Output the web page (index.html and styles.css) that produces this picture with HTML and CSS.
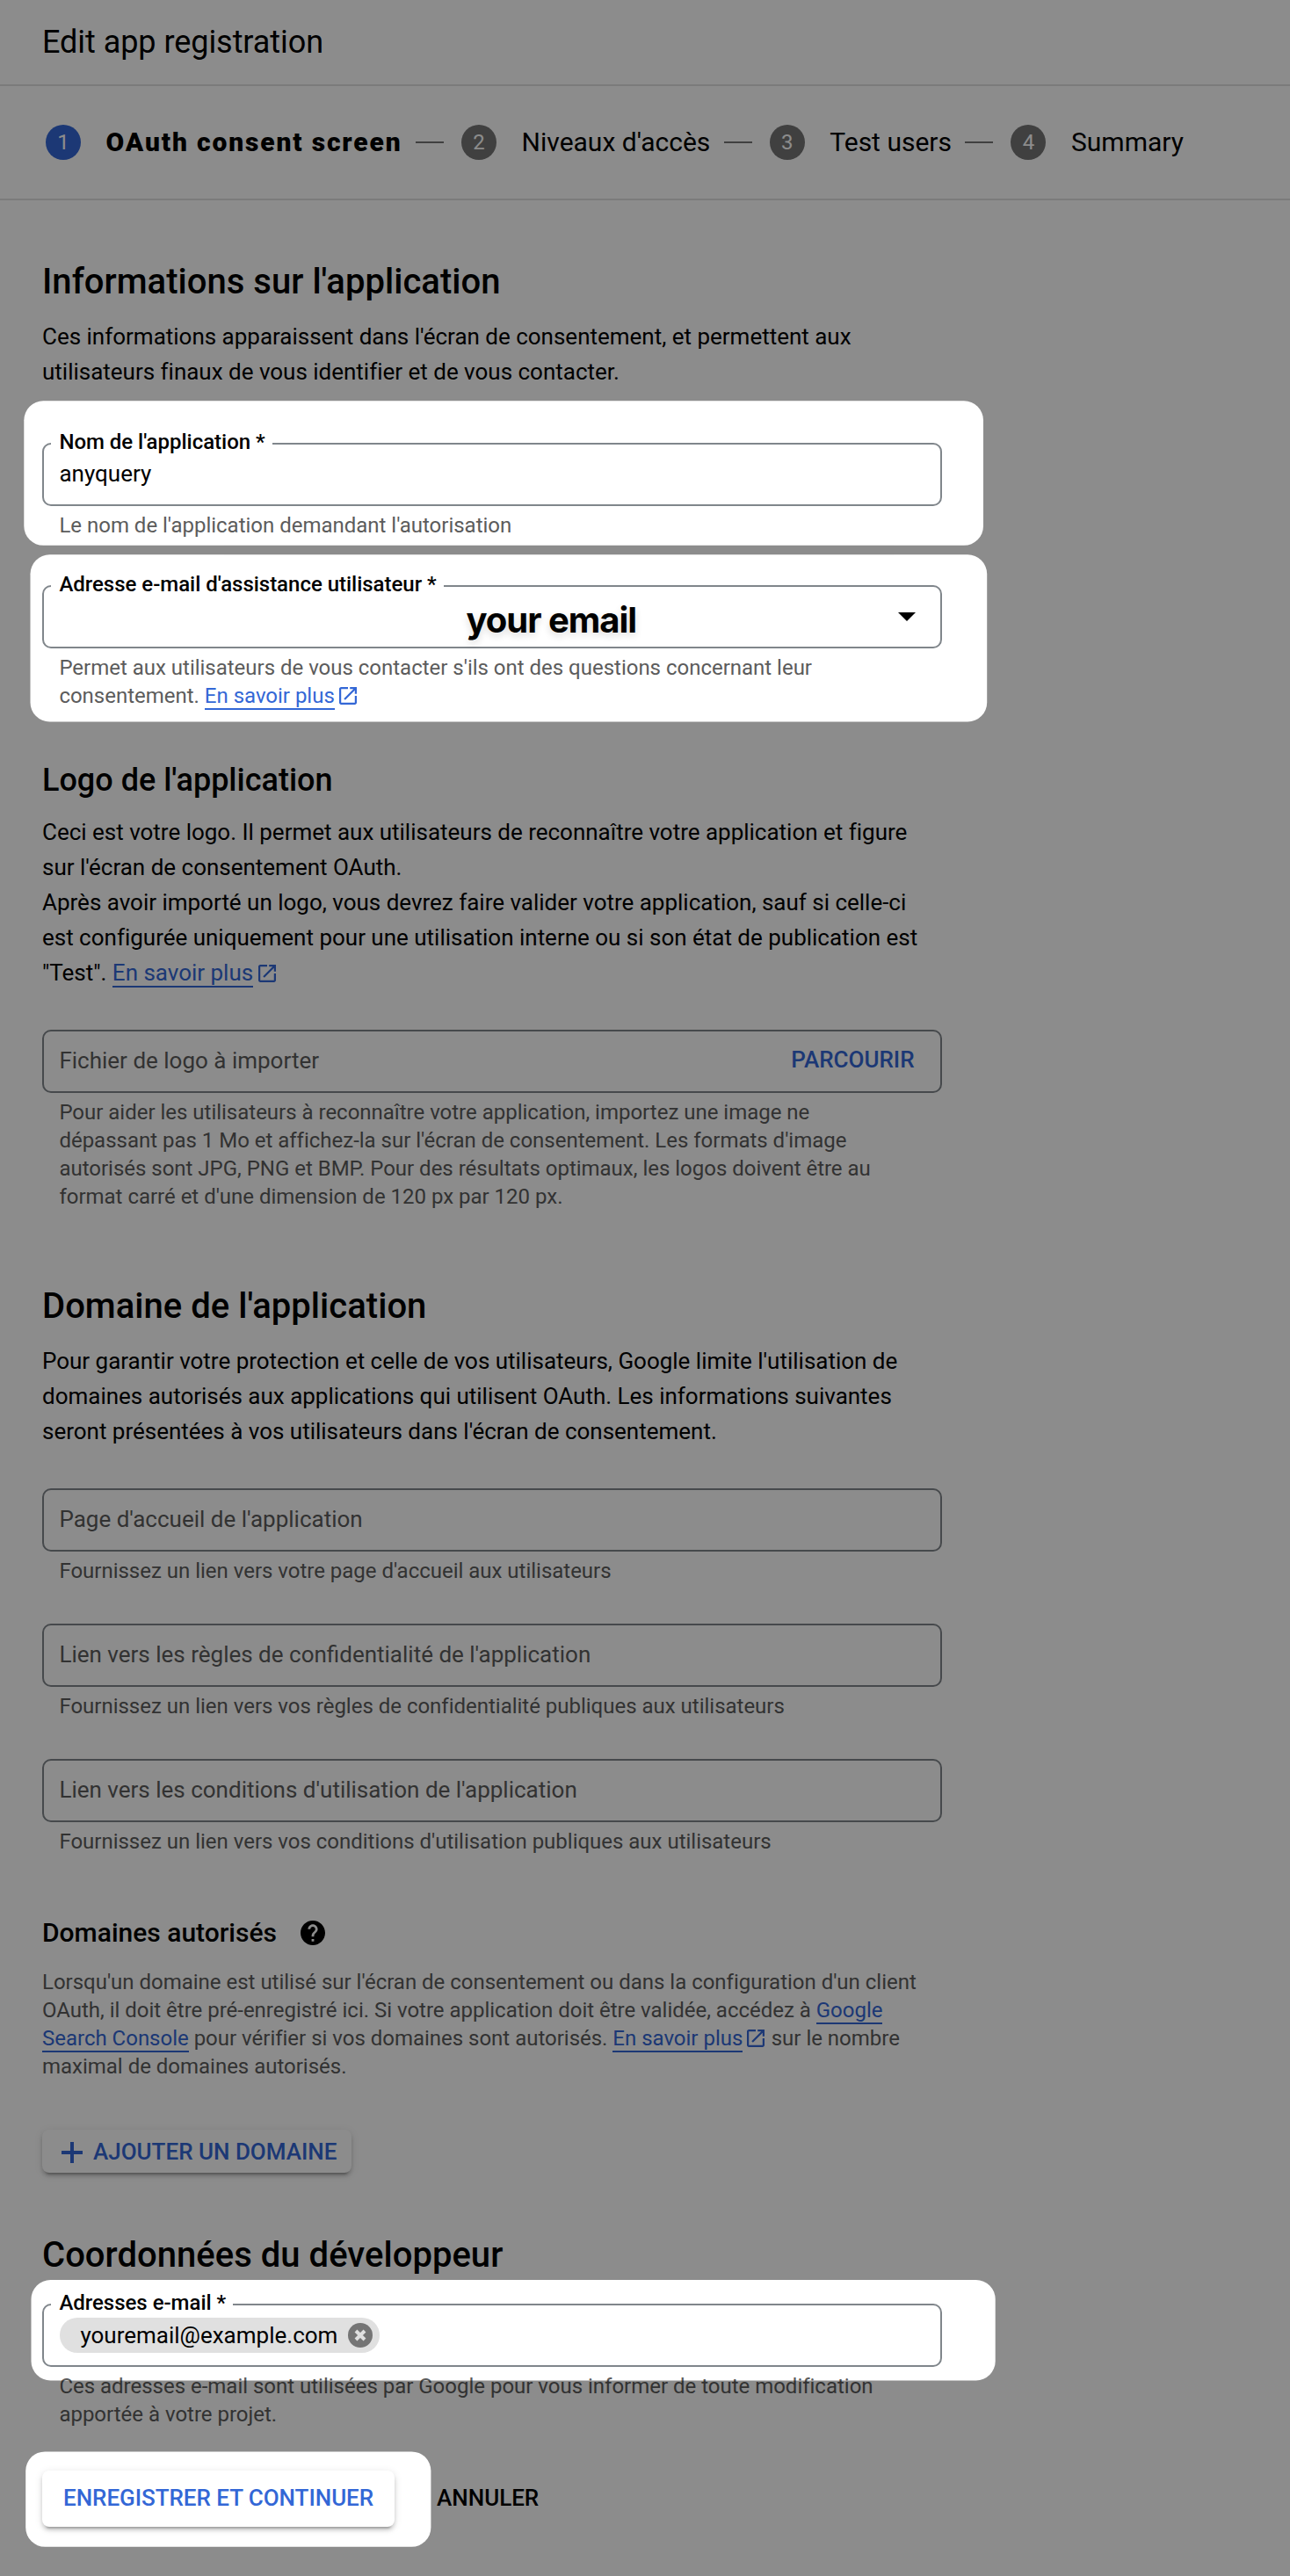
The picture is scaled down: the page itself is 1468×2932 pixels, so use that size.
FILE: index.html
```html
<!DOCTYPE html>
<html lang="fr">
<head>
<meta charset="utf-8">
<title>Edit app registration</title>
<link rel="stylesheet" href="styles.css">
</head>
<body>
<svg class="sprite" aria-hidden="true">
  <symbol id="open-in-new" viewBox="3 3 18 18">
    <path d="M19 19H5V5h7V3H5c-1.11 0-2 .9-2 2v14c0 1.1.89 2 2 2h14c1.1 0 2-.9 2-2v-7h-2v7zM14 3v2h3.59l-9.83 9.83 1.41 1.41L19 6.41V10h2V3h-7z"/>
  </symbol>
</svg>
<div class="page">
  <header class="page-header"><h1>Edit app registration</h1></header>

  <nav class="stepper">
    <div class="step active"><span class="num">1</span><span class="name">OAuth consent screen</span></div>
    <span class="line"></span>
    <div class="step"><span class="num">2</span><span class="name">Niveaux d'accès</span></div>
    <span class="line"></span>
    <div class="step"><span class="num">3</span><span class="name">Test users</span></div>
    <span class="line"></span>
    <div class="step"><span class="num">4</span><span class="name">Summary</span></div>
  </nav>

  <main class="form">
    <section class="info">
      <h2>Informations sur l'application</h2>
      <p class="intro">Ces informations apparaissent dans l'écran de consentement, et permettent aux<br>utilisateurs finaux de vous identifier et de vous contacter.</p>
      <div class="field name-field">
        <label class="floating">Nom de l'application *</label>
        <span class="value">anyquery</span>
      </div>
      <p class="hint">Le nom de l'application demandant l'autorisation</p>
      <div class="field email-field">
        <label class="floating">Adresse e-mail d'assistance utilisateur *</label>
        <strong class="placeholder-mail">your email</strong>
        <svg class="caret" viewBox="0 0 20 10"><path d="M0 0h20L10 10z"/></svg>
      </div>
      <p class="hint">Permet aux utilisateurs de vous contacter s'ils ont des questions concernant leur<br>consentement. <a href="#">En savoir plus</a><svg class="ext"><use href="#open-in-new"/></svg></p>
    </section>

    <section class="logo">
      <h3>Logo de l'application</h3>
      <p class="intro">Ceci est votre logo. Il permet aux utilisateurs de reconnaître votre application et figure<br>sur l'écran de consentement OAuth.<br>Après avoir importé un logo, vous devrez faire valider votre application, sauf si celle-ci<br>est configurée uniquement pour une utilisation interne ou si son état de publication est<br>"Test". <a href="#">En savoir plus</a><svg class="ext"><use href="#open-in-new"/></svg></p>
      <div class="field">
        <span class="prompt">Fichier de logo à importer</span>
        <span class="browse">PARCOURIR</span>
      </div>
      <p class="hint">Pour aider les utilisateurs à reconnaître votre application, importez une image ne<br>dépassant pas 1 Mo et affichez-la sur l'écran de consentement. Les formats d'image<br>autorisés sont JPG, PNG et BMP. Pour des résultats optimaux, les logos doivent être au<br>format carré et d'une dimension de 120 px par 120 px.</p>
    </section>

    <section class="domain">
      <h2>Domaine de l'application</h2>
      <p class="intro">Pour garantir votre protection et celle de vos utilisateurs, Google limite l'utilisation de<br>domaines autorisés aux applications qui utilisent OAuth. Les informations suivantes<br>seront présentées à vos utilisateurs dans l'écran de consentement.</p>
      <div class="field"><span class="prompt">Page d'accueil de l'application</span></div>
      <p class="hint">Fournissez un lien vers votre page d'accueil aux utilisateurs</p>
      <div class="field next"><span class="prompt">Lien vers les règles de confidentialité de l'application</span></div>
      <p class="hint">Fournissez un lien vers vos règles de confidentialité publiques aux utilisateurs</p>
      <div class="field next"><span class="prompt">Lien vers les conditions d'utilisation de l'application</span></div>
      <p class="hint">Fournissez un lien vers vos conditions d'utilisation publiques aux utilisateurs</p>
    </section>

    <section class="authorized">
      <h4>Domaines autorisés
        <svg class="help" viewBox="2 2 20 20"><path d="M12 2C6.48 2 2 6.48 2 12s4.48 10 10 10 10-4.48 10-10S17.52 2 12 2zm1 17h-2v-2h2v2zm2.07-7.75l-.9.92C13.45 12.9 13 13.5 13 15h-2v-.5c0-1.1.45-2.1 1.17-2.83l1.24-1.26c.37-.36.59-.86.59-1.41 0-1.1-.9-2-2-2s-2 .9-2 2H8c0-2.21 1.79-4 4-4s4 1.79 4 4c0 .88-.36 1.68-.93 2.25z"/></svg>
      </h4>
      <p class="note">Lorsqu'un domaine est utilisé sur l'écran de consentement ou dans la configuration d'un client<br>OAuth, il doit être pré-enregistré ici. Si votre application doit être validée, accédez à <a href="#">Google<br>Search Console</a> pour vérifier si vos domaines sont autorisés. <a href="#">En savoir plus</a><svg class="ext"><use href="#open-in-new"/></svg> sur le nombre<br>maximal de domaines autorisés.</p>
      <button class="btn raised add"><svg class="plus" viewBox="0 0 24 24"><path d="M12 0v24M0 12h24"/></svg>AJOUTER UN DOMAINE</button>
    </section>

    <section class="developer">
      <h2>Coordonnées du développeur</h2>
      <div class="field">
        <label class="floating">Adresses e-mail *</label>
        <span class="chip">youremail@example.com<svg class="remove" viewBox="0 0 28 28"><circle cx="14" cy="14" r="14"/><path d="M9 9l10 10M19 9L9 19"/></svg></span>
      </div>
      <p class="hint">Ces adresses e-mail sont utilisées par Google pour vous informer de toute modification<br>apportée à votre projet.</p>
      <div class="actions">
        <button class="btn raised save">ENREGISTRER ET CONTINUER</button>
        <button class="btn cancel">ANNULER</button>
      </div>
    </section>
  </main>

  <!-- Dimming layer with one rounded opening per highlighted area -->
  <svg class="dim" width="1468" height="2932" viewBox="0 0 1468 2932">
    <mask id="openings">
      <rect width="1468" height="2932" fill="#fff"/>
      <rect x="27.3" y="456.3" width="1091.7" height="164.5" rx="22"/>
      <rect x="34.5" y="631.3" width="1088.7" height="190.2" rx="22"/>
      <rect x="35.5" y="2595" width="1097.2" height="114.4" rx="22"/>
      <rect x="29.2" y="2790.4" width="461.2" height="108.4" rx="22"/>
    </mask>
    <rect width="1468" height="2932" fill-opacity=".45" mask="url(#openings)"/>
  </svg>
</div>
</body>
</html>
```
FILE: styles.css
```css
* { box-sizing: border-box; }
body { margin: 0; background: #fff; color: #000; font-family: Roboto, "Liberation Sans", sans-serif; }
h1, h2, h3, h4, p { margin: 0; font-weight: 500; }
.sprite { position: absolute; width: 0; height: 0; }
.page { position: relative; width: 1468px; height: 2932px; overflow: hidden; }
.dim { position: absolute; inset: 0; }

.page-header { height: 98px; padding-left: 48px; border-bottom: 2px solid #e0e0e0; }
.page-header h1 { font-size: 36px; line-height: 96px; font-weight: 400; letter-spacing: -.05px; }

.stepper { display: flex; align-items: center; height: 130px; padding-left: 52px; border-bottom: 2px solid #e0e0e0; }
.step { display: flex; align-items: center; font-size: 30px; line-height: 40px; }
.num { width: 40px; height: 40px; margin-right: 28px; border-radius: 50%; background: #757575; color: #fff; font-size: 24px; font-weight: 400; text-align: center; }
.name { padding-left: .6px; margin-right: -.6px; }
.active .num { background: #3367d6; }
.active .name { width: 337px; margin-right: 0; font-weight: 900; letter-spacing: 1.85px; white-space: nowrap; }
.line { width: 32px; height: 2px; margin: 0 20px 0 16px; background: #757575; }

.form { width: 1072px; padding: 68px 0 0 48px; }
h2 { font-size: 40px; line-height: 50px; letter-spacing: .03px; }
h3 { font-size: 36px; line-height: 44px; }
h4 { display: flex; align-items: center; gap: 27px; font-size: 30px; line-height: 40px; }
.intro { margin-top: 17px; font-size: 26px; line-height: 40px; font-weight: 400; letter-spacing: -.01px; }
.hint, .note { font-size: 24px; line-height: 32px; font-weight: 400; letter-spacing: -.012px; color: #5c5c5c; }
.hint { margin-top: 6px; padding-left: 19.4px; }
.note { margin-top: 20px; }
a { color: #3367d6; text-decoration: none; border-bottom: 2px solid #3367d6; }
.ext { width: 20px; height: 20px; margin: 0 1.5px -2px 5px; fill: #3367d6; vertical-align: baseline; }
.logo .ext { margin-left: 6px; }

.field { position: relative; display: flex; align-items: center; justify-content: space-between; height: 72px; margin-top: 45px; padding: 0 16.5px 0 17.4px; border: 2px solid #80868b; border-radius: 10px; font-size: 26px; line-height: 32px; }
.field.name-field { margin-top: 61px; }
.field.email-field { margin-top: 52px; }
.field.next { margin-top: 44px; }
.floating { position: absolute; left: 8px; top: -17px; padding: 0 8px 0 9.4px; background: #fff; font-size: 24px; line-height: 28px; font-weight: 500; letter-spacing: -.02px; }
.value { padding-bottom: 2px; }
.prompt { padding-bottom: 2px; color: #5c5c5c; }
.browse { padding: 0 13px 4px 0; color: #3367d6; font-weight: 500; }
.placeholder-mail { margin-left: 463px; padding-top: 7px; font-family: Inter, sans-serif; font-size: 40px; line-height: 48px; font-weight: 700; letter-spacing: -1px; text-shadow: 0 4px 8px rgba(0, 0, 0, .14); }
.caret { width: 20px; height: 10px; margin-right: 11.5px; }

.logo { margin-top: 58px; }
.domain { margin-top: 84px; }
.authorized { margin-top: 68px; }
.help { width: 28px; height: 28px; }
.developer { margin-top: 70px; }
.developer .field { margin-top: 30px; }

.btn { display: flex; align-items: center; border: 0; border-radius: 8px; background: transparent; color: #3367d6; font: 500 26px/32px Roboto, "Liberation Sans", sans-serif; white-space: nowrap; }
.raised { background: #fff; box-shadow: 0 6px 2px -4px rgba(0, 0, 0, .2), 0 4px 4px rgba(0, 0, 0, .14), 0 2px 10px rgba(0, 0, 0, .12); }
.add { width: 352px; height: 49px; margin-top: 56px; margin-bottom: -1px; padding: 0 0 0 22px; gap: 12px; }
.plus { width: 24px; height: 24px; margin-top: 3px; fill: none; stroke: #3367d6; stroke-width: 4; }
.chip { display: flex; align-items: center; gap: 11.6px; height: 40px; margin-left: .6px; padding: 0 8px 0 23.4px; border-radius: 20px; background: #e0e0e0; }
.remove { width: 28px; height: 28px; fill: #757575; }
.remove path { stroke: #e0e0e0; stroke-width: 4; }
.actions { display: flex; align-items: center; margin-top: 48px; }
.save { width: 401px; height: 64px; padding: 0 0 3px 24px; letter-spacing: -.04px; }
.cancel { height: 64px; margin-left: 48px; padding: 0 0 3px; color: #000; }
```
